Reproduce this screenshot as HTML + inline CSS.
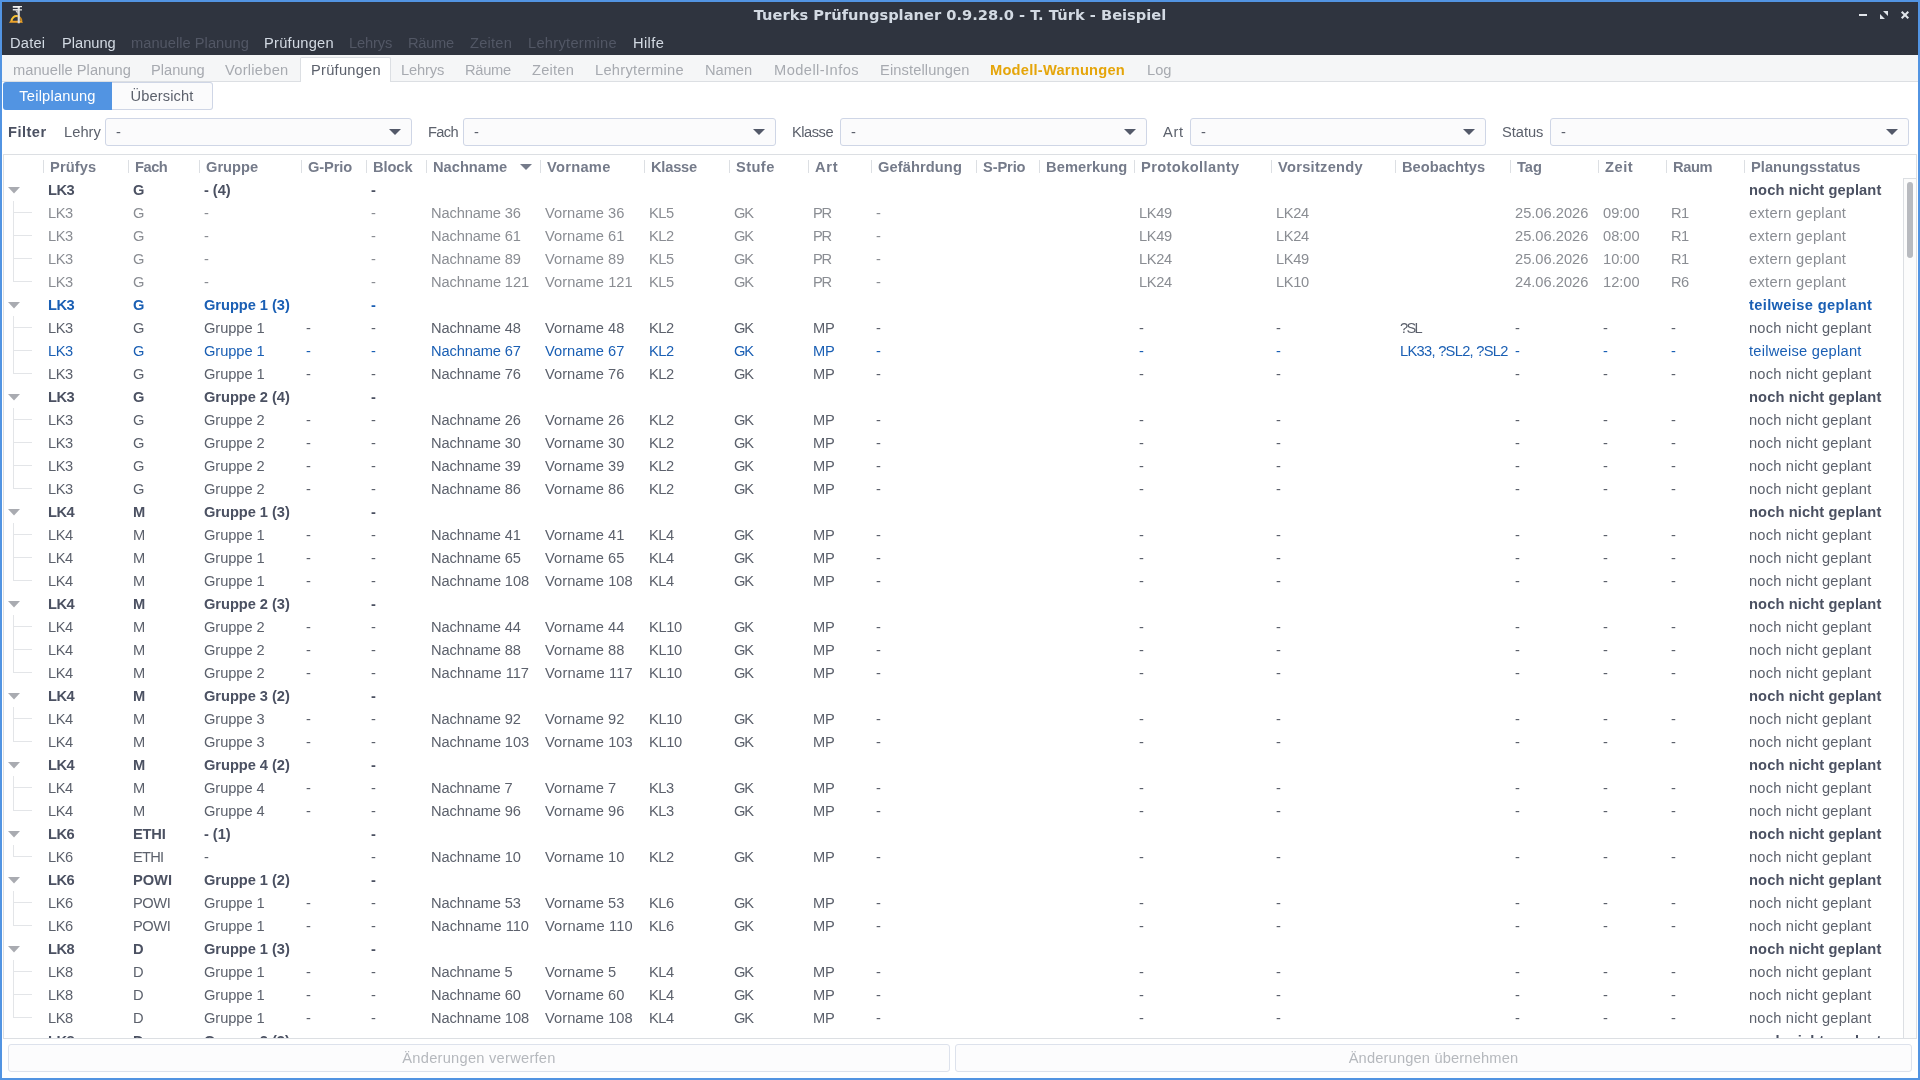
<!DOCTYPE html>
<html lang="de">
<head>
<meta charset="utf-8">
<title>Tuerks Prüfungsplaner 0.9.28.0 - T. Türk - Beispiel</title>
<style>
html,body{margin:0;padding:0}
body{width:1920px;height:1080px;overflow:hidden;background:#5294e2;font-family:"Liberation Sans",sans-serif;font-size:14.667px;color:#5c616c;position:relative}
span{white-space:pre}
#win{will-change:transform;position:absolute;left:2px;top:2px;width:1916px;height:1076px;background:#fff;overflow:hidden}
#titlebar{position:absolute;left:0;top:0;width:1916px;height:53px;background:#2f343f}
#title{position:absolute;left:0;top:1px;width:1916px;text-align:center;font-family:"DejaVu Sans",sans-serif;font-weight:700;font-size:14.667px;line-height:24px;color:#d3dae3}
#appicon{position:absolute;left:0;top:0}
.wc{position:absolute;left:1854px;top:6px}
#menubar{position:absolute;left:0;top:30px;width:1916px;height:24px}
.mi{position:absolute;top:0;line-height:23px;color:#d3dae3}
.mi.dis{color:#525765}
#tabs{position:absolute;left:0;top:53px;width:1916px;height:26px;background:#f5f6f7;border-bottom:1px solid #dcdfe3}
#acttab{position:absolute;left:298px;top:2px;width:89px;height:24px;border-radius:2px 2px 0 0;background:#fff;border:1px solid #dcdfe3;border-bottom:none}
.tb{position:absolute;top:4px;line-height:23px;color:#a7aab0}
.tb.act{color:#5c616c}
.tb.warn{color:#e5a50a;font-weight:700}
#seg{position:absolute;left:1px;top:80px;height:28px;width:210px}
.sg{position:absolute;top:0;height:28px;box-sizing:border-box;line-height:26px;text-align:center}
.sg.on{left:0;width:109px;background:#5294e2;color:#fff;border-radius:3px 0 0 3px;line-height:28px}
.sg.off{left:109px;width:101px;background:#fbfbfc;border:1px solid #cfd6e6;border-left:none;border-radius:0 3px 3px 0}
#filter{position:absolute;left:0;top:116px;width:1916px;height:28px}
.fl{position:absolute;top:3px;line-height:23px}
.fb{font-weight:700;color:#4b5162}
.combo{position:absolute;top:0;height:28px;box-sizing:border-box;border:1px solid #cfd6e6;border-radius:3px;background:#fbfbfc}
.cv{position:absolute;left:10px;top:2px;line-height:23px}
.ca{position:absolute;right:10px;top:10px;fill:#535969}
#tree{position:absolute;left:1px;top:152px;width:1914px;height:885px;box-sizing:border-box;border:1px solid #dcdfe3;background:#fff;overflow:hidden}
#thead{position:absolute;left:0;top:0;width:1912px;height:23px}
.th{position:absolute;top:1px;line-height:23px;font-weight:700;color:#757b8a}
.sep{position:absolute;top:5px;width:1px;height:13px;background:#dcdfe3}
.sort{position:absolute;top:9px;fill:#757b8a}
#tbody{position:absolute;left:0;top:23px;width:1899px;height:860px;overflow:hidden}
.row{position:absolute;left:0;width:1899px;height:23px;line-height:23px}
.row span{position:absolute;top:1px}
.row.g{font-weight:700;color:#4b5162}
.row.x{color:#8a8d93}
.row.b{color:#1a5fb4}
.exp{position:absolute;left:4px;top:9px;fill:#a9abb1}
.hl{position:absolute;left:9px;top:11px;width:19px;height:1px;background:#e3e5e8}
.vl{position:absolute;left:9px;top:23px;width:1px;background:#e3e5e8}
#sbar{position:absolute;left:1899px;top:23px;width:13px;height:860px;box-sizing:border-box;border-left:1px solid #dcdfe3;border-top:1px solid #dcdfe3;background:#fcfcfc}
#thumb{position:absolute;left:3px;top:3px;width:6px;height:76px;border-radius:3px;background:#b8babf}
.bb{position:absolute;top:1042px;height:28px;box-sizing:border-box;border:1px solid #dde2ec;border-radius:3px;background:#fcfcfd;text-align:center;line-height:26px;color:#b5b8bd}

.pr{left:44px}
.fa{left:129px}
.gr{left:200px}
.gp{left:302px}
.bl{left:367px}
.nn{left:427px}
.vn{left:541px}
.kl{left:645px}
.st{left:730px}
.ar{left:809px}
.ge{left:872px}
.sp{left:977px}
.be{left:1040px}
.po{left:1135px}
.vo{left:1272px}
.bo{left:1396px}
.tg{left:1511px}
.zt{left:1599px}
.ra{left:1667px}
.ps{left:1745px}
</style>
</head>
<body>
<div id="win">
<div id="titlebar">
<svg id="appicon" width="30" height="26" viewBox="2 2 30 26"><path d="M16.5 16.1A5 5.4 0 0 1 21.5 21.5" fill="none" stroke="#c98a22" stroke-width="2"/><path d="M11.5 21.5A5 5.4 0 0 1 17.6 16.2" fill="none" stroke="#f6c137" stroke-width="2"/><path d="M9 22.7l1.4-2h11.2l1.4 2z" fill="#eda22b"/><rect x="17.7" y="6.3" width="2.1" height="17" fill="#d9dadc"/><path d="M12.8 6h9.2v1.3h-2.2v.5h-7z" fill="#f2f2f2"/><path d="M12.8 8.9h7v.4h2.2v1.2h-9.2z" fill="#e6e6e6"/><path d="M15.2 10.5l2.5 3.6v-3.6z" fill="#d9dadc"/></svg>
<div id="title">Tuerks Prüfungsplaner 0.9.28.0 - T. Türk - Beispiel</div>
<svg class="wc" width="60" height="16" viewBox="1856 8 60 16"><rect x="1859" y="14" width="8" height="2" fill="#e1e5ea"/><path d="M1883 11h5v5zM1880 14v5h5z" fill="#e1e5ea"/><path d="M1901.7 11.7l6.6 6.6M1908.3 11.7l-6.6 6.6" stroke="#e1e5ea" stroke-width="2" fill="none"/></svg>
</div>

<div id="menubar">
<span class="mi" style="letter-spacing:0.21px;left:8px">Datei</span>
<span class="mi" style="letter-spacing:-0.01px;left:60px">Planung</span>
<span class="mi dis" style="letter-spacing:0.03px;left:129px">manuelle Planung</span>
<span class="mi" style="letter-spacing:0.25px;left:262px">Prüfungen</span>
<span class="mi dis" style="letter-spacing:-0.13px;left:347px">Lehrys</span>
<span class="mi dis" style="letter-spacing:-0.3px;left:406px">Räume</span>
<span class="mi dis" style="letter-spacing:0.23px;left:468px">Zeiten</span>
<span class="mi dis" style="letter-spacing:0.28px;left:526px">Lehrytermine</span>
<span class="mi" style="letter-spacing:0.39px;left:631px">Hilfe</span>
</div>
<div id="tabs"><div id="acttab"></div>
<span class="tb" style="letter-spacing:0.03px;left:11px">manuelle Planung</span>
<span class="tb" style="letter-spacing:-0.01px;left:149px">Planung</span>
<span class="tb" style="letter-spacing:0.26px;left:223px">Vorlieben</span>
<span class="tb act" style="letter-spacing:0.25px;left:309px">Prüfungen</span>
<span class="tb" style="letter-spacing:-0.13px;left:399px">Lehrys</span>
<span class="tb" style="letter-spacing:-0.3px;left:463px">Räume</span>
<span class="tb" style="letter-spacing:0.23px;left:530px">Zeiten</span>
<span class="tb" style="letter-spacing:0.28px;left:593px">Lehrytermine</span>
<span class="tb" style="letter-spacing:-0.03px;left:703px">Namen</span>
<span class="tb" style="letter-spacing:0.43px;left:772px">Modell-Infos</span>
<span class="tb" style="letter-spacing:0.12px;left:878px">Einstellungen</span>
<span class="tb warn" style="letter-spacing:0.23px;left:988px">Modell-Warnungen</span>
<span class="tb" style="left:1145px">Log</span>
</div>
<div id="seg"><div class="sg on"><span style="letter-spacing:0.21px;">Teilplanung</span></div><div class="sg off"><span style="letter-spacing:0.13px;">Übersicht</span></div></div>
<div id="filter"><span class="fl fb" style="letter-spacing:0.47px;left:6px">Filter</span>
<span class="fl" style="letter-spacing:0.04px;left:62px">Lehry</span>
<div class="combo" style="left:103px;width:307px"><span class="cv" style="letter-spacing:-0.64px;">-</span><svg class="ca" width="12" height="6" viewBox="0 0 12 6"><path d="M0 0h12l-6 6z"/></svg></div>
<span class="fl" style="letter-spacing:-0.68px;left:426px">Fach</span>
<div class="combo" style="left:461px;width:313px"><span class="cv" style="letter-spacing:-0.64px;">-</span><svg class="ca" width="12" height="6" viewBox="0 0 12 6"><path d="M0 0h12l-6 6z"/></svg></div>
<span class="fl" style="letter-spacing:-0.48px;left:790px">Klasse</span>
<div class="combo" style="left:838px;width:307px"><span class="cv" style="letter-spacing:-0.64px;">-</span><svg class="ca" width="12" height="6" viewBox="0 0 12 6"><path d="M0 0h12l-6 6z"/></svg></div>
<span class="fl" style="letter-spacing:0.7px;left:1161px">Art</span>
<div class="combo" style="left:1188px;width:296px"><span class="cv" style="letter-spacing:-0.64px;">-</span><svg class="ca" width="12" height="6" viewBox="0 0 12 6"><path d="M0 0h12l-6 6z"/></svg></div>
<span class="fl" style="letter-spacing:-0.02px;left:1500px">Status</span>
<div class="combo" style="left:1548px;width:359px"><span class="cv" style="letter-spacing:-0.64px;">-</span><svg class="ca" width="12" height="6" viewBox="0 0 12 6"><path d="M0 0h12l-6 6z"/></svg></div>
</div>
<div id="tree"><div id="thead">
<i class="sep" style="left:39px"></i>
<i class="sep" style="left:124px"></i>
<i class="sep" style="left:195px"></i>
<i class="sep" style="left:297px"></i>
<i class="sep" style="left:362px"></i>
<i class="sep" style="left:422px"></i>
<i class="sep" style="left:536px"></i>
<i class="sep" style="left:640px"></i>
<i class="sep" style="left:725px"></i>
<i class="sep" style="left:804px"></i>
<i class="sep" style="left:867px"></i>
<i class="sep" style="left:972px"></i>
<i class="sep" style="left:1035px"></i>
<i class="sep" style="left:1130px"></i>
<i class="sep" style="left:1267px"></i>
<i class="sep" style="left:1391px"></i>
<i class="sep" style="left:1506px"></i>
<i class="sep" style="left:1594px"></i>
<i class="sep" style="left:1662px"></i>
<i class="sep" style="left:1740px"></i>
<span class="th" style="letter-spacing:0.12px;left:46px">Prüfys</span>
<span class="th" style="letter-spacing:-0.46px;left:131px">Fach</span>
<span class="th" style="left:202px">Gruppe</span>
<span class="th" style="letter-spacing:-0.11px;left:304px">G-Prio</span>
<span class="th" style="letter-spacing:-0.09px;left:369px">Block</span>
<span class="th" style="left:429px">Nachname</span>
<span class="th" style="letter-spacing:0.28px;left:543px">Vorname</span>
<span class="th" style="letter-spacing:-0.22px;left:647px">Klasse</span>
<span class="th" style="letter-spacing:0.41px;left:732px">Stufe</span>
<span class="th" style="letter-spacing:0.67px;left:811px">Art</span>
<span class="th" style="letter-spacing:0.09px;left:874px">Gefährdung</span>
<span class="th" style="letter-spacing:-0.12px;left:979px">S-Prio</span>
<span class="th" style="letter-spacing:0.08px;left:1042px">Bemerkung</span>
<span class="th" style="letter-spacing:0.38px;left:1137px">Protokollanty</span>
<span class="th" style="letter-spacing:0.27px;left:1274px">Vorsitzendy</span>
<span class="th" style="left:1398px">Beobachtys</span>
<span class="th" style="left:1513px">Tag</span>
<span class="th" style="letter-spacing:0.56px;left:1601px">Zeit</span>
<span class="th" style="letter-spacing:-0.36px;left:1669px">Raum</span>
<span class="th" style="letter-spacing:0.02px;left:1747px">Planungsstatus</span>
<svg class="sort" width="12" height="6" viewBox="0 0 12 6" style="left:516px"><path d="M0 0h12l-6 6z"/></svg>
</div><div id="tbody">
<div class="row g" style="top:0px"><svg class="exp" width="12" height="7" viewBox="0 0 12 7"><path d="M0 0h12l-6 6.5z"/></svg><i class="vl" style="height:81px"></i><span class="pr" style="letter-spacing:-0.54px;">LK3</span><span class="fa" style="letter-spacing:-1.25px;">G</span><span class="gr" style="letter-spacing:-0.04px;">- (4)</span><span class="bl" style="letter-spacing:-0.09px;">-</span><span class="ps" style="letter-spacing:0.12px;">noch nicht geplant</span></div>
<div class="row c x" style="top:23px"><i class="hl"></i><span class="pr" style="letter-spacing:-0.47px;">LK3</span><span class="fa" style="letter-spacing:-1.69px;">G</span><span class="gr" style="letter-spacing:-0.64px;">-</span><span class="bl" style="letter-spacing:-0.64px;">-</span><span class="nn" style="letter-spacing:-0.14px;">Nachname 36</span><span class="vn" style="letter-spacing:0.04px;">Vorname 36</span><span class="kl" style="letter-spacing:-0.47px;">KL5</span><span class="st" style="letter-spacing:-1.27px;">GK</span><span class="ar" style="letter-spacing:-1.23px;">PR</span><span class="ge" style="letter-spacing:-0.64px;">-</span><span class="po" style="letter-spacing:-0.33px;">LK49</span><span class="vo" style="letter-spacing:-0.33px;">LK24</span><span class="tg">25.06.2026</span><span class="zt">09:00</span><span class="ra" style="letter-spacing:-0.66px;">R1</span><span class="ps" style="letter-spacing:0.31px;">extern geplant</span></div>
<div class="row c x" style="top:46px"><i class="hl"></i><span class="pr" style="letter-spacing:-0.47px;">LK3</span><span class="fa" style="letter-spacing:-1.69px;">G</span><span class="gr" style="letter-spacing:-0.64px;">-</span><span class="bl" style="letter-spacing:-0.64px;">-</span><span class="nn" style="letter-spacing:-0.14px;">Nachname 61</span><span class="vn" style="letter-spacing:0.04px;">Vorname 61</span><span class="kl" style="letter-spacing:-0.47px;">KL2</span><span class="st" style="letter-spacing:-1.27px;">GK</span><span class="ar" style="letter-spacing:-1.23px;">PR</span><span class="ge" style="letter-spacing:-0.64px;">-</span><span class="po" style="letter-spacing:-0.33px;">LK49</span><span class="vo" style="letter-spacing:-0.33px;">LK24</span><span class="tg">25.06.2026</span><span class="zt">08:00</span><span class="ra" style="letter-spacing:-0.66px;">R1</span><span class="ps" style="letter-spacing:0.31px;">extern geplant</span></div>
<div class="row c x" style="top:69px"><i class="hl"></i><span class="pr" style="letter-spacing:-0.47px;">LK3</span><span class="fa" style="letter-spacing:-1.69px;">G</span><span class="gr" style="letter-spacing:-0.64px;">-</span><span class="bl" style="letter-spacing:-0.64px;">-</span><span class="nn" style="letter-spacing:-0.14px;">Nachname 89</span><span class="vn" style="letter-spacing:0.04px;">Vorname 89</span><span class="kl" style="letter-spacing:-0.47px;">KL5</span><span class="st" style="letter-spacing:-1.27px;">GK</span><span class="ar" style="letter-spacing:-1.23px;">PR</span><span class="ge" style="letter-spacing:-0.64px;">-</span><span class="po" style="letter-spacing:-0.33px;">LK24</span><span class="vo" style="letter-spacing:-0.33px;">LK49</span><span class="tg">25.06.2026</span><span class="zt">10:00</span><span class="ra" style="letter-spacing:-0.66px;">R1</span><span class="ps" style="letter-spacing:0.31px;">extern geplant</span></div>
<div class="row c x" style="top:92px"><i class="hl"></i><span class="pr" style="letter-spacing:-0.47px;">LK3</span><span class="fa" style="letter-spacing:-1.69px;">G</span><span class="gr" style="letter-spacing:-0.64px;">-</span><span class="bl" style="letter-spacing:-0.64px;">-</span><span class="nn" style="letter-spacing:-0.12px;">Nachname 121</span><span class="vn" style="letter-spacing:0.05px;">Vorname 121</span><span class="kl" style="letter-spacing:-0.47px;">KL5</span><span class="st" style="letter-spacing:-1.27px;">GK</span><span class="ar" style="letter-spacing:-1.23px;">PR</span><span class="ge" style="letter-spacing:-0.64px;">-</span><span class="po" style="letter-spacing:-0.33px;">LK24</span><span class="vo" style="letter-spacing:-0.33px;">LK10</span><span class="tg">24.06.2026</span><span class="zt">12:00</span><span class="ra" style="letter-spacing:-0.66px;">R6</span><span class="ps" style="letter-spacing:0.31px;">extern geplant</span></div>
<div class="row g b" style="top:115px"><svg class="exp" width="12" height="7" viewBox="0 0 12 7"><path d="M0 0h12l-6 6.5z"/></svg><i class="vl" style="height:58px"></i><span class="pr" style="letter-spacing:-0.54px;">LK3</span><span class="fa" style="letter-spacing:-1.25px;">G</span><span class="gr" style="letter-spacing:-0.05px;">Gruppe 1 (3)</span><span class="bl" style="letter-spacing:-0.09px;">-</span><span class="ps" style="letter-spacing:0.35px;">teilweise geplant</span></div>
<div class="row c" style="top:138px"><i class="hl"></i><span class="pr" style="letter-spacing:-0.47px;">LK3</span><span class="fa" style="letter-spacing:-1.69px;">G</span><span class="gr" style="letter-spacing:-0.07px;">Gruppe 1</span><span class="bl" style="letter-spacing:-0.64px;">-</span><span class="nn" style="letter-spacing:-0.14px;">Nachname 48</span><span class="vn" style="letter-spacing:0.04px;">Vorname 48</span><span class="kl" style="letter-spacing:-0.47px;">KL2</span><span class="st" style="letter-spacing:-1.27px;">GK</span><span class="ar" style="letter-spacing:-0.23px;">MP</span><span class="ge" style="letter-spacing:-0.64px;">-</span><span class="po" style="letter-spacing:-0.64px;">-</span><span class="vo" style="letter-spacing:-0.64px;">-</span><span class="bo" style="letter-spacing:-1.74px;">?SL</span><span class="tg" style="letter-spacing:-0.64px;">-</span><span class="zt" style="letter-spacing:-0.64px;">-</span><span class="ra" style="letter-spacing:-0.64px;">-</span><span class="ps" style="letter-spacing:0.19px;">noch nicht geplant</span><span class="gp" style="letter-spacing:-0.64px;">-</span></div>
<div class="row c b" style="top:161px"><i class="hl"></i><span class="pr" style="letter-spacing:-0.47px;">LK3</span><span class="fa" style="letter-spacing:-1.69px;">G</span><span class="gr" style="letter-spacing:-0.07px;">Gruppe 1</span><span class="bl" style="letter-spacing:-0.64px;">-</span><span class="nn" style="letter-spacing:-0.14px;">Nachname 67</span><span class="vn" style="letter-spacing:0.04px;">Vorname 67</span><span class="kl" style="letter-spacing:-0.47px;">KL2</span><span class="st" style="letter-spacing:-1.27px;">GK</span><span class="ar" style="letter-spacing:-0.23px;">MP</span><span class="ge" style="letter-spacing:-0.64px;">-</span><span class="po" style="letter-spacing:-0.64px;">-</span><span class="vo" style="letter-spacing:-0.64px;">-</span><span class="bo" style="letter-spacing:-0.7px;">LK33, ?SL2, ?SL2</span><span class="tg" style="letter-spacing:-0.64px;">-</span><span class="zt" style="letter-spacing:-0.64px;">-</span><span class="ra" style="letter-spacing:-0.64px;">-</span><span class="ps" style="letter-spacing:0.25px;">teilweise geplant</span><span class="gp" style="letter-spacing:-0.64px;">-</span></div>
<div class="row c" style="top:184px"><i class="hl"></i><span class="pr" style="letter-spacing:-0.47px;">LK3</span><span class="fa" style="letter-spacing:-1.69px;">G</span><span class="gr" style="letter-spacing:-0.07px;">Gruppe 1</span><span class="bl" style="letter-spacing:-0.64px;">-</span><span class="nn" style="letter-spacing:-0.14px;">Nachname 76</span><span class="vn" style="letter-spacing:0.04px;">Vorname 76</span><span class="kl" style="letter-spacing:-0.47px;">KL2</span><span class="st" style="letter-spacing:-1.27px;">GK</span><span class="ar" style="letter-spacing:-0.23px;">MP</span><span class="ge" style="letter-spacing:-0.64px;">-</span><span class="po" style="letter-spacing:-0.64px;">-</span><span class="vo" style="letter-spacing:-0.64px;">-</span><span class="tg" style="letter-spacing:-0.64px;">-</span><span class="zt" style="letter-spacing:-0.64px;">-</span><span class="ra" style="letter-spacing:-0.64px;">-</span><span class="ps" style="letter-spacing:0.19px;">noch nicht geplant</span><span class="gp" style="letter-spacing:-0.64px;">-</span></div>
<div class="row g" style="top:207px"><svg class="exp" width="12" height="7" viewBox="0 0 12 7"><path d="M0 0h12l-6 6.5z"/></svg><i class="vl" style="height:81px"></i><span class="pr" style="letter-spacing:-0.54px;">LK3</span><span class="fa" style="letter-spacing:-1.25px;">G</span><span class="gr" style="letter-spacing:-0.05px;">Gruppe 2 (4)</span><span class="bl" style="letter-spacing:-0.09px;">-</span><span class="ps" style="letter-spacing:0.12px;">noch nicht geplant</span></div>
<div class="row c" style="top:230px"><i class="hl"></i><span class="pr" style="letter-spacing:-0.47px;">LK3</span><span class="fa" style="letter-spacing:-1.69px;">G</span><span class="gr" style="letter-spacing:-0.07px;">Gruppe 2</span><span class="bl" style="letter-spacing:-0.64px;">-</span><span class="nn" style="letter-spacing:-0.14px;">Nachname 26</span><span class="vn" style="letter-spacing:0.04px;">Vorname 26</span><span class="kl" style="letter-spacing:-0.47px;">KL2</span><span class="st" style="letter-spacing:-1.27px;">GK</span><span class="ar" style="letter-spacing:-0.23px;">MP</span><span class="ge" style="letter-spacing:-0.64px;">-</span><span class="po" style="letter-spacing:-0.64px;">-</span><span class="vo" style="letter-spacing:-0.64px;">-</span><span class="tg" style="letter-spacing:-0.64px;">-</span><span class="zt" style="letter-spacing:-0.64px;">-</span><span class="ra" style="letter-spacing:-0.64px;">-</span><span class="ps" style="letter-spacing:0.19px;">noch nicht geplant</span><span class="gp" style="letter-spacing:-0.64px;">-</span></div>
<div class="row c" style="top:253px"><i class="hl"></i><span class="pr" style="letter-spacing:-0.47px;">LK3</span><span class="fa" style="letter-spacing:-1.69px;">G</span><span class="gr" style="letter-spacing:-0.07px;">Gruppe 2</span><span class="bl" style="letter-spacing:-0.64px;">-</span><span class="nn" style="letter-spacing:-0.14px;">Nachname 30</span><span class="vn" style="letter-spacing:0.04px;">Vorname 30</span><span class="kl" style="letter-spacing:-0.47px;">KL2</span><span class="st" style="letter-spacing:-1.27px;">GK</span><span class="ar" style="letter-spacing:-0.23px;">MP</span><span class="ge" style="letter-spacing:-0.64px;">-</span><span class="po" style="letter-spacing:-0.64px;">-</span><span class="vo" style="letter-spacing:-0.64px;">-</span><span class="tg" style="letter-spacing:-0.64px;">-</span><span class="zt" style="letter-spacing:-0.64px;">-</span><span class="ra" style="letter-spacing:-0.64px;">-</span><span class="ps" style="letter-spacing:0.19px;">noch nicht geplant</span><span class="gp" style="letter-spacing:-0.64px;">-</span></div>
<div class="row c" style="top:276px"><i class="hl"></i><span class="pr" style="letter-spacing:-0.47px;">LK3</span><span class="fa" style="letter-spacing:-1.69px;">G</span><span class="gr" style="letter-spacing:-0.07px;">Gruppe 2</span><span class="bl" style="letter-spacing:-0.64px;">-</span><span class="nn" style="letter-spacing:-0.14px;">Nachname 39</span><span class="vn" style="letter-spacing:0.04px;">Vorname 39</span><span class="kl" style="letter-spacing:-0.47px;">KL2</span><span class="st" style="letter-spacing:-1.27px;">GK</span><span class="ar" style="letter-spacing:-0.23px;">MP</span><span class="ge" style="letter-spacing:-0.64px;">-</span><span class="po" style="letter-spacing:-0.64px;">-</span><span class="vo" style="letter-spacing:-0.64px;">-</span><span class="tg" style="letter-spacing:-0.64px;">-</span><span class="zt" style="letter-spacing:-0.64px;">-</span><span class="ra" style="letter-spacing:-0.64px;">-</span><span class="ps" style="letter-spacing:0.19px;">noch nicht geplant</span><span class="gp" style="letter-spacing:-0.64px;">-</span></div>
<div class="row c" style="top:299px"><i class="hl"></i><span class="pr" style="letter-spacing:-0.47px;">LK3</span><span class="fa" style="letter-spacing:-1.69px;">G</span><span class="gr" style="letter-spacing:-0.07px;">Gruppe 2</span><span class="bl" style="letter-spacing:-0.64px;">-</span><span class="nn" style="letter-spacing:-0.14px;">Nachname 86</span><span class="vn" style="letter-spacing:0.04px;">Vorname 86</span><span class="kl" style="letter-spacing:-0.47px;">KL2</span><span class="st" style="letter-spacing:-1.27px;">GK</span><span class="ar" style="letter-spacing:-0.23px;">MP</span><span class="ge" style="letter-spacing:-0.64px;">-</span><span class="po" style="letter-spacing:-0.64px;">-</span><span class="vo" style="letter-spacing:-0.64px;">-</span><span class="tg" style="letter-spacing:-0.64px;">-</span><span class="zt" style="letter-spacing:-0.64px;">-</span><span class="ra" style="letter-spacing:-0.64px;">-</span><span class="ps" style="letter-spacing:0.19px;">noch nicht geplant</span><span class="gp" style="letter-spacing:-0.64px;">-</span></div>
<div class="row g" style="top:322px"><svg class="exp" width="12" height="7" viewBox="0 0 12 7"><path d="M0 0h12l-6 6.5z"/></svg><i class="vl" style="height:58px"></i><span class="pr" style="letter-spacing:-0.54px;">LK4</span><span class="fa" style="letter-spacing:0.83px;">M</span><span class="gr" style="letter-spacing:-0.05px;">Gruppe 1 (3)</span><span class="bl" style="letter-spacing:-0.09px;">-</span><span class="ps" style="letter-spacing:0.12px;">noch nicht geplant</span></div>
<div class="row c" style="top:345px"><i class="hl"></i><span class="pr" style="letter-spacing:-0.47px;">LK4</span><span class="fa" style="letter-spacing:0.53px;">M</span><span class="gr" style="letter-spacing:-0.07px;">Gruppe 1</span><span class="bl" style="letter-spacing:-0.64px;">-</span><span class="nn" style="letter-spacing:-0.14px;">Nachname 41</span><span class="vn" style="letter-spacing:0.04px;">Vorname 41</span><span class="kl" style="letter-spacing:-0.47px;">KL4</span><span class="st" style="letter-spacing:-1.27px;">GK</span><span class="ar" style="letter-spacing:-0.23px;">MP</span><span class="ge" style="letter-spacing:-0.64px;">-</span><span class="po" style="letter-spacing:-0.64px;">-</span><span class="vo" style="letter-spacing:-0.64px;">-</span><span class="tg" style="letter-spacing:-0.64px;">-</span><span class="zt" style="letter-spacing:-0.64px;">-</span><span class="ra" style="letter-spacing:-0.64px;">-</span><span class="ps" style="letter-spacing:0.19px;">noch nicht geplant</span><span class="gp" style="letter-spacing:-0.64px;">-</span></div>
<div class="row c" style="top:368px"><i class="hl"></i><span class="pr" style="letter-spacing:-0.47px;">LK4</span><span class="fa" style="letter-spacing:0.53px;">M</span><span class="gr" style="letter-spacing:-0.07px;">Gruppe 1</span><span class="bl" style="letter-spacing:-0.64px;">-</span><span class="nn" style="letter-spacing:-0.14px;">Nachname 65</span><span class="vn" style="letter-spacing:0.04px;">Vorname 65</span><span class="kl" style="letter-spacing:-0.47px;">KL4</span><span class="st" style="letter-spacing:-1.27px;">GK</span><span class="ar" style="letter-spacing:-0.23px;">MP</span><span class="ge" style="letter-spacing:-0.64px;">-</span><span class="po" style="letter-spacing:-0.64px;">-</span><span class="vo" style="letter-spacing:-0.64px;">-</span><span class="tg" style="letter-spacing:-0.64px;">-</span><span class="zt" style="letter-spacing:-0.64px;">-</span><span class="ra" style="letter-spacing:-0.64px;">-</span><span class="ps" style="letter-spacing:0.19px;">noch nicht geplant</span><span class="gp" style="letter-spacing:-0.64px;">-</span></div>
<div class="row c" style="top:391px"><i class="hl"></i><span class="pr" style="letter-spacing:-0.47px;">LK4</span><span class="fa" style="letter-spacing:0.53px;">M</span><span class="gr" style="letter-spacing:-0.07px;">Gruppe 1</span><span class="bl" style="letter-spacing:-0.64px;">-</span><span class="nn" style="letter-spacing:-0.12px;">Nachname 108</span><span class="vn" style="letter-spacing:0.05px;">Vorname 108</span><span class="kl" style="letter-spacing:-0.47px;">KL4</span><span class="st" style="letter-spacing:-1.27px;">GK</span><span class="ar" style="letter-spacing:-0.23px;">MP</span><span class="ge" style="letter-spacing:-0.64px;">-</span><span class="po" style="letter-spacing:-0.64px;">-</span><span class="vo" style="letter-spacing:-0.64px;">-</span><span class="tg" style="letter-spacing:-0.64px;">-</span><span class="zt" style="letter-spacing:-0.64px;">-</span><span class="ra" style="letter-spacing:-0.64px;">-</span><span class="ps" style="letter-spacing:0.19px;">noch nicht geplant</span><span class="gp" style="letter-spacing:-0.64px;">-</span></div>
<div class="row g" style="top:414px"><svg class="exp" width="12" height="7" viewBox="0 0 12 7"><path d="M0 0h12l-6 6.5z"/></svg><i class="vl" style="height:58px"></i><span class="pr" style="letter-spacing:-0.54px;">LK4</span><span class="fa" style="letter-spacing:0.83px;">M</span><span class="gr" style="letter-spacing:-0.05px;">Gruppe 2 (3)</span><span class="bl" style="letter-spacing:-0.09px;">-</span><span class="ps" style="letter-spacing:0.12px;">noch nicht geplant</span></div>
<div class="row c" style="top:437px"><i class="hl"></i><span class="pr" style="letter-spacing:-0.47px;">LK4</span><span class="fa" style="letter-spacing:0.53px;">M</span><span class="gr" style="letter-spacing:-0.07px;">Gruppe 2</span><span class="bl" style="letter-spacing:-0.64px;">-</span><span class="nn" style="letter-spacing:-0.14px;">Nachname 44</span><span class="vn" style="letter-spacing:0.04px;">Vorname 44</span><span class="kl" style="letter-spacing:-0.33px;">KL10</span><span class="st" style="letter-spacing:-1.27px;">GK</span><span class="ar" style="letter-spacing:-0.23px;">MP</span><span class="ge" style="letter-spacing:-0.64px;">-</span><span class="po" style="letter-spacing:-0.64px;">-</span><span class="vo" style="letter-spacing:-0.64px;">-</span><span class="tg" style="letter-spacing:-0.64px;">-</span><span class="zt" style="letter-spacing:-0.64px;">-</span><span class="ra" style="letter-spacing:-0.64px;">-</span><span class="ps" style="letter-spacing:0.19px;">noch nicht geplant</span><span class="gp" style="letter-spacing:-0.64px;">-</span></div>
<div class="row c" style="top:460px"><i class="hl"></i><span class="pr" style="letter-spacing:-0.47px;">LK4</span><span class="fa" style="letter-spacing:0.53px;">M</span><span class="gr" style="letter-spacing:-0.07px;">Gruppe 2</span><span class="bl" style="letter-spacing:-0.64px;">-</span><span class="nn" style="letter-spacing:-0.14px;">Nachname 88</span><span class="vn" style="letter-spacing:0.04px;">Vorname 88</span><span class="kl" style="letter-spacing:-0.33px;">KL10</span><span class="st" style="letter-spacing:-1.27px;">GK</span><span class="ar" style="letter-spacing:-0.23px;">MP</span><span class="ge" style="letter-spacing:-0.64px;">-</span><span class="po" style="letter-spacing:-0.64px;">-</span><span class="vo" style="letter-spacing:-0.64px;">-</span><span class="tg" style="letter-spacing:-0.64px;">-</span><span class="zt" style="letter-spacing:-0.64px;">-</span><span class="ra" style="letter-spacing:-0.64px;">-</span><span class="ps" style="letter-spacing:0.19px;">noch nicht geplant</span><span class="gp" style="letter-spacing:-0.64px;">-</span></div>
<div class="row c" style="top:483px"><i class="hl"></i><span class="pr" style="letter-spacing:-0.47px;">LK4</span><span class="fa" style="letter-spacing:0.53px;">M</span><span class="gr" style="letter-spacing:-0.07px;">Gruppe 2</span><span class="bl" style="letter-spacing:-0.64px;">-</span><span class="nn" style="letter-spacing:-0.03px;">Nachname 117</span><span class="vn" style="letter-spacing:0.15px;">Vorname 117</span><span class="kl" style="letter-spacing:-0.33px;">KL10</span><span class="st" style="letter-spacing:-1.27px;">GK</span><span class="ar" style="letter-spacing:-0.23px;">MP</span><span class="ge" style="letter-spacing:-0.64px;">-</span><span class="po" style="letter-spacing:-0.64px;">-</span><span class="vo" style="letter-spacing:-0.64px;">-</span><span class="tg" style="letter-spacing:-0.64px;">-</span><span class="zt" style="letter-spacing:-0.64px;">-</span><span class="ra" style="letter-spacing:-0.64px;">-</span><span class="ps" style="letter-spacing:0.19px;">noch nicht geplant</span><span class="gp" style="letter-spacing:-0.64px;">-</span></div>
<div class="row g" style="top:506px"><svg class="exp" width="12" height="7" viewBox="0 0 12 7"><path d="M0 0h12l-6 6.5z"/></svg><i class="vl" style="height:35px"></i><span class="pr" style="letter-spacing:-0.54px;">LK4</span><span class="fa" style="letter-spacing:0.83px;">M</span><span class="gr" style="letter-spacing:-0.05px;">Gruppe 3 (2)</span><span class="bl" style="letter-spacing:-0.09px;">-</span><span class="ps" style="letter-spacing:0.12px;">noch nicht geplant</span></div>
<div class="row c" style="top:529px"><i class="hl"></i><span class="pr" style="letter-spacing:-0.47px;">LK4</span><span class="fa" style="letter-spacing:0.53px;">M</span><span class="gr" style="letter-spacing:-0.07px;">Gruppe 3</span><span class="bl" style="letter-spacing:-0.64px;">-</span><span class="nn" style="letter-spacing:-0.14px;">Nachname 92</span><span class="vn" style="letter-spacing:0.04px;">Vorname 92</span><span class="kl" style="letter-spacing:-0.33px;">KL10</span><span class="st" style="letter-spacing:-1.27px;">GK</span><span class="ar" style="letter-spacing:-0.23px;">MP</span><span class="ge" style="letter-spacing:-0.64px;">-</span><span class="po" style="letter-spacing:-0.64px;">-</span><span class="vo" style="letter-spacing:-0.64px;">-</span><span class="tg" style="letter-spacing:-0.64px;">-</span><span class="zt" style="letter-spacing:-0.64px;">-</span><span class="ra" style="letter-spacing:-0.64px;">-</span><span class="ps" style="letter-spacing:0.19px;">noch nicht geplant</span><span class="gp" style="letter-spacing:-0.64px;">-</span></div>
<div class="row c" style="top:552px"><i class="hl"></i><span class="pr" style="letter-spacing:-0.47px;">LK4</span><span class="fa" style="letter-spacing:0.53px;">M</span><span class="gr" style="letter-spacing:-0.07px;">Gruppe 3</span><span class="bl" style="letter-spacing:-0.64px;">-</span><span class="nn" style="letter-spacing:-0.12px;">Nachname 103</span><span class="vn" style="letter-spacing:0.05px;">Vorname 103</span><span class="kl" style="letter-spacing:-0.33px;">KL10</span><span class="st" style="letter-spacing:-1.27px;">GK</span><span class="ar" style="letter-spacing:-0.23px;">MP</span><span class="ge" style="letter-spacing:-0.64px;">-</span><span class="po" style="letter-spacing:-0.64px;">-</span><span class="vo" style="letter-spacing:-0.64px;">-</span><span class="tg" style="letter-spacing:-0.64px;">-</span><span class="zt" style="letter-spacing:-0.64px;">-</span><span class="ra" style="letter-spacing:-0.64px;">-</span><span class="ps" style="letter-spacing:0.19px;">noch nicht geplant</span><span class="gp" style="letter-spacing:-0.64px;">-</span></div>
<div class="row g" style="top:575px"><svg class="exp" width="12" height="7" viewBox="0 0 12 7"><path d="M0 0h12l-6 6.5z"/></svg><i class="vl" style="height:35px"></i><span class="pr" style="letter-spacing:-0.54px;">LK4</span><span class="fa" style="letter-spacing:0.83px;">M</span><span class="gr" style="letter-spacing:-0.05px;">Gruppe 4 (2)</span><span class="bl" style="letter-spacing:-0.09px;">-</span><span class="ps" style="letter-spacing:0.12px;">noch nicht geplant</span></div>
<div class="row c" style="top:598px"><i class="hl"></i><span class="pr" style="letter-spacing:-0.47px;">LK4</span><span class="fa" style="letter-spacing:0.53px;">M</span><span class="gr" style="letter-spacing:-0.07px;">Gruppe 4</span><span class="bl" style="letter-spacing:-0.64px;">-</span><span class="nn" style="letter-spacing:-0.17px;">Nachname 7</span><span class="vn" style="letter-spacing:0.03px;">Vorname 7</span><span class="kl" style="letter-spacing:-0.47px;">KL3</span><span class="st" style="letter-spacing:-1.27px;">GK</span><span class="ar" style="letter-spacing:-0.23px;">MP</span><span class="ge" style="letter-spacing:-0.64px;">-</span><span class="po" style="letter-spacing:-0.64px;">-</span><span class="vo" style="letter-spacing:-0.64px;">-</span><span class="tg" style="letter-spacing:-0.64px;">-</span><span class="zt" style="letter-spacing:-0.64px;">-</span><span class="ra" style="letter-spacing:-0.64px;">-</span><span class="ps" style="letter-spacing:0.19px;">noch nicht geplant</span><span class="gp" style="letter-spacing:-0.64px;">-</span></div>
<div class="row c" style="top:621px"><i class="hl"></i><span class="pr" style="letter-spacing:-0.47px;">LK4</span><span class="fa" style="letter-spacing:0.53px;">M</span><span class="gr" style="letter-spacing:-0.07px;">Gruppe 4</span><span class="bl" style="letter-spacing:-0.64px;">-</span><span class="nn" style="letter-spacing:-0.14px;">Nachname 96</span><span class="vn" style="letter-spacing:0.04px;">Vorname 96</span><span class="kl" style="letter-spacing:-0.47px;">KL3</span><span class="st" style="letter-spacing:-1.27px;">GK</span><span class="ar" style="letter-spacing:-0.23px;">MP</span><span class="ge" style="letter-spacing:-0.64px;">-</span><span class="po" style="letter-spacing:-0.64px;">-</span><span class="vo" style="letter-spacing:-0.64px;">-</span><span class="tg" style="letter-spacing:-0.64px;">-</span><span class="zt" style="letter-spacing:-0.64px;">-</span><span class="ra" style="letter-spacing:-0.64px;">-</span><span class="ps" style="letter-spacing:0.19px;">noch nicht geplant</span><span class="gp" style="letter-spacing:-0.64px;">-</span></div>
<div class="row g" style="top:644px"><svg class="exp" width="12" height="7" viewBox="0 0 12 7"><path d="M0 0h12l-6 6.5z"/></svg><i class="vl" style="height:12px"></i><span class="pr" style="letter-spacing:-0.54px;">LK6</span><span class="fa" style="letter-spacing:-0.21px;">ETHI</span><span class="gr" style="letter-spacing:-0.04px;">- (1)</span><span class="bl" style="letter-spacing:-0.09px;">-</span><span class="ps" style="letter-spacing:0.12px;">noch nicht geplant</span></div>
<div class="row c" style="top:667px"><i class="hl"></i><span class="pr" style="letter-spacing:-0.47px;">LK6</span><span class="fa" style="letter-spacing:-0.76px;">ETHI</span><span class="gr" style="letter-spacing:-0.64px;">-</span><span class="bl" style="letter-spacing:-0.64px;">-</span><span class="nn" style="letter-spacing:-0.14px;">Nachname 10</span><span class="vn" style="letter-spacing:0.04px;">Vorname 10</span><span class="kl" style="letter-spacing:-0.47px;">KL2</span><span class="st" style="letter-spacing:-1.27px;">GK</span><span class="ar" style="letter-spacing:-0.23px;">MP</span><span class="ge" style="letter-spacing:-0.64px;">-</span><span class="po" style="letter-spacing:-0.64px;">-</span><span class="vo" style="letter-spacing:-0.64px;">-</span><span class="tg" style="letter-spacing:-0.64px;">-</span><span class="zt" style="letter-spacing:-0.64px;">-</span><span class="ra" style="letter-spacing:-0.64px;">-</span><span class="ps" style="letter-spacing:0.19px;">noch nicht geplant</span></div>
<div class="row g" style="top:690px"><svg class="exp" width="12" height="7" viewBox="0 0 12 7"><path d="M0 0h12l-6 6.5z"/></svg><i class="vl" style="height:35px"></i><span class="pr" style="letter-spacing:-0.54px;">LK6</span><span class="fa" style="letter-spacing:-0.04px;">POWI</span><span class="gr" style="letter-spacing:-0.05px;">Gruppe 1 (2)</span><span class="bl" style="letter-spacing:-0.09px;">-</span><span class="ps" style="letter-spacing:0.12px;">noch nicht geplant</span></div>
<div class="row c" style="top:713px"><i class="hl"></i><span class="pr" style="letter-spacing:-0.47px;">LK6</span><span class="fa" style="letter-spacing:-0.42px;">POWI</span><span class="gr" style="letter-spacing:-0.07px;">Gruppe 1</span><span class="bl" style="letter-spacing:-0.64px;">-</span><span class="nn" style="letter-spacing:-0.14px;">Nachname 53</span><span class="vn" style="letter-spacing:0.04px;">Vorname 53</span><span class="kl" style="letter-spacing:-0.47px;">KL6</span><span class="st" style="letter-spacing:-1.27px;">GK</span><span class="ar" style="letter-spacing:-0.23px;">MP</span><span class="ge" style="letter-spacing:-0.64px;">-</span><span class="po" style="letter-spacing:-0.64px;">-</span><span class="vo" style="letter-spacing:-0.64px;">-</span><span class="tg" style="letter-spacing:-0.64px;">-</span><span class="zt" style="letter-spacing:-0.64px;">-</span><span class="ra" style="letter-spacing:-0.64px;">-</span><span class="ps" style="letter-spacing:0.19px;">noch nicht geplant</span><span class="gp" style="letter-spacing:-0.64px;">-</span></div>
<div class="row c" style="top:736px"><i class="hl"></i><span class="pr" style="letter-spacing:-0.47px;">LK6</span><span class="fa" style="letter-spacing:-0.42px;">POWI</span><span class="gr" style="letter-spacing:-0.07px;">Gruppe 1</span><span class="bl" style="letter-spacing:-0.64px;">-</span><span class="nn" style="letter-spacing:-0.03px;">Nachname 110</span><span class="vn" style="letter-spacing:0.15px;">Vorname 110</span><span class="kl" style="letter-spacing:-0.47px;">KL6</span><span class="st" style="letter-spacing:-1.27px;">GK</span><span class="ar" style="letter-spacing:-0.23px;">MP</span><span class="ge" style="letter-spacing:-0.64px;">-</span><span class="po" style="letter-spacing:-0.64px;">-</span><span class="vo" style="letter-spacing:-0.64px;">-</span><span class="tg" style="letter-spacing:-0.64px;">-</span><span class="zt" style="letter-spacing:-0.64px;">-</span><span class="ra" style="letter-spacing:-0.64px;">-</span><span class="ps" style="letter-spacing:0.19px;">noch nicht geplant</span><span class="gp" style="letter-spacing:-0.64px;">-</span></div>
<div class="row g" style="top:759px"><svg class="exp" width="12" height="7" viewBox="0 0 12 7"><path d="M0 0h12l-6 6.5z"/></svg><i class="vl" style="height:58px"></i><span class="pr" style="letter-spacing:-0.54px;">LK8</span><span class="fa" style="letter-spacing:0.09px;">D</span><span class="gr" style="letter-spacing:-0.05px;">Gruppe 1 (3)</span><span class="bl" style="letter-spacing:-0.09px;">-</span><span class="ps" style="letter-spacing:0.12px;">noch nicht geplant</span></div>
<div class="row c" style="top:782px"><i class="hl"></i><span class="pr" style="letter-spacing:-0.47px;">LK8</span><span class="fa" style="letter-spacing:-0.23px;">D</span><span class="gr" style="letter-spacing:-0.07px;">Gruppe 1</span><span class="bl" style="letter-spacing:-0.64px;">-</span><span class="nn" style="letter-spacing:-0.17px;">Nachname 5</span><span class="vn" style="letter-spacing:0.03px;">Vorname 5</span><span class="kl" style="letter-spacing:-0.47px;">KL4</span><span class="st" style="letter-spacing:-1.27px;">GK</span><span class="ar" style="letter-spacing:-0.23px;">MP</span><span class="ge" style="letter-spacing:-0.64px;">-</span><span class="po" style="letter-spacing:-0.64px;">-</span><span class="vo" style="letter-spacing:-0.64px;">-</span><span class="tg" style="letter-spacing:-0.64px;">-</span><span class="zt" style="letter-spacing:-0.64px;">-</span><span class="ra" style="letter-spacing:-0.64px;">-</span><span class="ps" style="letter-spacing:0.19px;">noch nicht geplant</span><span class="gp" style="letter-spacing:-0.64px;">-</span></div>
<div class="row c" style="top:805px"><i class="hl"></i><span class="pr" style="letter-spacing:-0.47px;">LK8</span><span class="fa" style="letter-spacing:-0.23px;">D</span><span class="gr" style="letter-spacing:-0.07px;">Gruppe 1</span><span class="bl" style="letter-spacing:-0.64px;">-</span><span class="nn" style="letter-spacing:-0.14px;">Nachname 60</span><span class="vn" style="letter-spacing:0.04px;">Vorname 60</span><span class="kl" style="letter-spacing:-0.47px;">KL4</span><span class="st" style="letter-spacing:-1.27px;">GK</span><span class="ar" style="letter-spacing:-0.23px;">MP</span><span class="ge" style="letter-spacing:-0.64px;">-</span><span class="po" style="letter-spacing:-0.64px;">-</span><span class="vo" style="letter-spacing:-0.64px;">-</span><span class="tg" style="letter-spacing:-0.64px;">-</span><span class="zt" style="letter-spacing:-0.64px;">-</span><span class="ra" style="letter-spacing:-0.64px;">-</span><span class="ps" style="letter-spacing:0.19px;">noch nicht geplant</span><span class="gp" style="letter-spacing:-0.64px;">-</span></div>
<div class="row c" style="top:828px"><i class="hl"></i><span class="pr" style="letter-spacing:-0.47px;">LK8</span><span class="fa" style="letter-spacing:-0.23px;">D</span><span class="gr" style="letter-spacing:-0.07px;">Gruppe 1</span><span class="bl" style="letter-spacing:-0.64px;">-</span><span class="nn" style="letter-spacing:-0.12px;">Nachname 108</span><span class="vn" style="letter-spacing:0.05px;">Vorname 108</span><span class="kl" style="letter-spacing:-0.47px;">KL4</span><span class="st" style="letter-spacing:-1.27px;">GK</span><span class="ar" style="letter-spacing:-0.23px;">MP</span><span class="ge" style="letter-spacing:-0.64px;">-</span><span class="po" style="letter-spacing:-0.64px;">-</span><span class="vo" style="letter-spacing:-0.64px;">-</span><span class="tg" style="letter-spacing:-0.64px;">-</span><span class="zt" style="letter-spacing:-0.64px;">-</span><span class="ra" style="letter-spacing:-0.64px;">-</span><span class="ps" style="letter-spacing:0.19px;">noch nicht geplant</span><span class="gp" style="letter-spacing:-0.64px;">-</span></div>
<div class="row g" style="top:851px"><svg class="exp" width="12" height="7" viewBox="0 0 12 7"><path d="M0 0h12l-6 6.5z"/></svg><span class="pr" style="letter-spacing:-0.54px;">LK8</span><span class="fa" style="letter-spacing:0.09px;">D</span><span class="gr" style="letter-spacing:-0.05px;">Gruppe 2 (3)</span><span class="bl" style="letter-spacing:-0.09px;">-</span><span class="ps" style="letter-spacing:0.12px;">noch nicht geplant</span></div>
</div><div id="sbar"><div id="thumb"></div></div></div>
<div class="bb" style="left:6px;width:942px"><span style="letter-spacing:0.25px;">Änderungen verwerfen</span></div>
<div class="bb" style="left:953px;width:957px"><span style="letter-spacing:0.16px;">Änderungen übernehmen</span></div>
</div>
</body>
</html>
